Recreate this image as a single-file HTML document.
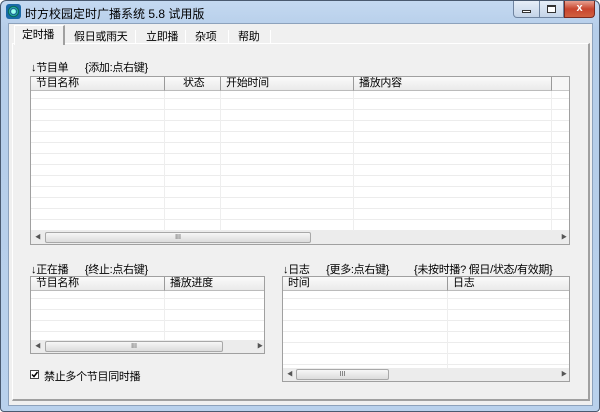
<!DOCTYPE html>
<html><head><meta charset="utf-8"><style>
*{margin:0;padding:0;box-sizing:border-box}
body{width:600px;height:412px;overflow:hidden;font-family:"Liberation Sans","Noto Sans CJK SC","WenQuanYi Zen Hei",sans-serif;font-size:11px;color:#000;background:#fff}
.win{position:absolute;left:0;top:0;width:600px;height:412px;border:1px solid #4a5a70;border-radius:6px 6px 4px 4px;background:linear-gradient(#c4d9f1,#b5cde9 30px,#b9d1ec);}
.client{position:absolute;left:7px;top:22px;width:585px;height:383px;background:#f0f0f0;border:1px solid #8da2bc}
.a{position:absolute}
.title{left:24px;top:4px;font-size:12px;color:#000}
.tab{position:absolute;top:28px;height:16px;line-height:15px;font-size:11px;letter-spacing:-0.3px}
.sep{position:absolute;top:30px;width:1px;height:14px;background:#999;border-right:1px solid #fff}
.panel{position:absolute;left:12px;top:43px;width:578px;height:358px;border-top:1px solid #fff;border-left:1px solid #fff;border-right:2px solid #a0a0a0;border-bottom:2px solid #a0a0a0}
.lv{position:absolute;background:#fff;border:1px solid #a0a0a0;overflow:hidden;
background-image:repeating-linear-gradient(#fff 0 10px,#ececec 10px 11px)}
.hd{position:absolute;left:0;top:0;height:14px;right:0;background:#f6f6f6;border-bottom:1px solid #c8c8c8}
.hc{position:absolute;top:0;height:14px;line-height:13px;padding-left:5px;border-right:1px solid #9a9a9a;background:linear-gradient(#fafafa,#eaeaea);border-bottom:1px solid #bbb;letter-spacing:-0.3px}
.vl{position:absolute;top:14px;bottom:13px;width:1px;background:#eee}
.sb{position:absolute;left:0;right:0;bottom:0;height:13px;background:#ececec}
.th{position:absolute;top:1px;height:11px;border:1px solid #a8a8a8;border-radius:2px;background:linear-gradient(#f6f6f6,#dcdcdc);font-size:7px;text-align:center;line-height:9px;color:#555}
.ar{position:absolute;top:1px;font-size:6px;color:#555}
.lbl{position:absolute;font-size:11px;letter-spacing:-0.3px}
</style></head><body>
<div class="win">
 <div class="a" style="left:5px;top:3px;width:15px;height:15px;border-radius:3px;background:radial-gradient(circle,#9fe 0 2px,#0a4a80 3px,#3bb 4px,#064 5px,#1a6aa8 6px);"></div>
 <div class="a title">时方校园定时广播系统 5.8 试用版</div>
 <div class="a" style="left:512px;top:0;width:27px;height:17px;border:1px solid #6f84a0;border-top:none;border-radius:0 0 0 4px;background:linear-gradient(#e6eef8,#c4d4e8)"><div class="a" style="left:8px;top:9px;width:9px;height:3px;border:1px solid #333;background:#fff"></div></div>
 <div class="a" style="left:539px;top:0;width:24px;height:17px;border:1px solid #6f84a0;border-top:none;border-left:none;background:linear-gradient(#e6eef8,#c4d4e8)"><div class="a" style="left:7px;top:4px;width:9px;height:8px;border:1px solid #333;border-top-width:2px;background:#fff"></div></div>
 <div class="a" style="left:563px;top:0;width:31px;height:17px;border:1px solid #7a2a20;border-top:none;border-radius:0 0 4px 0;background:linear-gradient(#e8a090,#c8452e 50%,#d06040);color:#fff;font-weight:bold;font-size:11px;text-align:center;line-height:15px">x</div>
 <div class="client"></div>
</div>
<div class="panel"></div>
<div class="a" style="left:14px;top:25px;width:51px;height:20px;background:#f0f0f0;border:1px solid #fff;border-bottom:none;border-right:2px solid #a0a0a0"></div>
<div class="tab" style="left:22px;top:28px">定时播</div>
<div class="tab" style="left:74px;top:30px">假日或雨天</div>
<div class="sep" style="left:135px"></div>
<div class="tab" style="left:146px;top:30px">立即播</div>
<div class="sep" style="left:185px"></div>
<div class="tab" style="left:195px;top:30px">杂项</div>
<div class="sep" style="left:228px"></div>
<div class="tab" style="left:238px;top:30px">帮助</div>
<div class="sep" style="left:270px"></div>

<div class="lbl" style="left:31px;top:59px">↓节目单 &nbsp;&nbsp;&nbsp;&nbsp;&nbsp;{添加:点右键}</div>
<div class="lv" style="left:30px;top:76px;width:540px;height:169px">
 <div class="hd"></div>
 <div class="hc" style="left:0;width:134px">节目名称</div>
 <div class="hc" style="left:134px;width:56px;padding-left:18px">状态</div>
 <div class="hc" style="left:190px;width:133px">开始时间</div>
 <div class="hc" style="left:323px;width:198px">播放内容</div>
 <div class="vl" style="left:133px"></div><div class="vl" style="left:189px"></div><div class="vl" style="left:322px"></div><div class="vl" style="left:520px"></div>
 <div class="sb"><span class="ar" style="left:4px">◀</span><div class="th" style="left:14px;width:266px">III</div><span class="ar" style="left:530px">▶</span></div>
</div>

<div class="lbl" style="left:31px;top:261px">↓正在播 &nbsp;&nbsp;&nbsp;&nbsp;&nbsp;{终止:点右键}</div>
<div class="lv" style="left:30px;top:276px;width:235px;height:78px">
 <div class="hd"></div>
 <div class="hc" style="left:0;width:134px">节目名称</div>
 <div class="hc" style="left:134px;width:101px;border-right:none">播放进度</div>
 <div class="vl" style="left:133px"></div>
 <div class="sb"><span class="ar" style="left:4px">◀</span><div class="th" style="left:14px;width:178px">III</div><span class="ar" style="left:226px">▶</span></div>
</div>

<div class="a" style="left:30px;top:370px;width:9px;height:9px;border:1px solid #444;background:#fff"><svg class="a" style="left:0;top:0" width="7" height="7"><path d="M1 3.5 L3 5.5 L6.5 1" stroke="#000" stroke-width="1.5" fill="none"/></svg></div>
<div class="lbl" style="left:44px;top:368px">禁止多个节目同时播</div>

<div class="lbl" style="left:283px;top:261px">↓日志 &nbsp;&nbsp;&nbsp;&nbsp;&nbsp;{更多:点右键} &nbsp;&nbsp;&nbsp;&nbsp;&nbsp;&nbsp;&nbsp;&nbsp;{未按时播? 假日/状态/有效期}</div>
<div class="lv" style="left:282px;top:276px;width:288px;height:106px">
 <div class="hd"></div>
 <div class="hc" style="left:0;width:165px">时间</div>
 <div class="hc" style="left:165px;width:123px;border-right:none">日志</div>
 <div class="vl" style="left:164px"></div>
 <div class="sb"><span class="ar" style="left:4px">◀</span><div class="th" style="left:13px;width:93px">III</div><span class="ar" style="left:278px">▶</span></div>
</div>
</body></html>
